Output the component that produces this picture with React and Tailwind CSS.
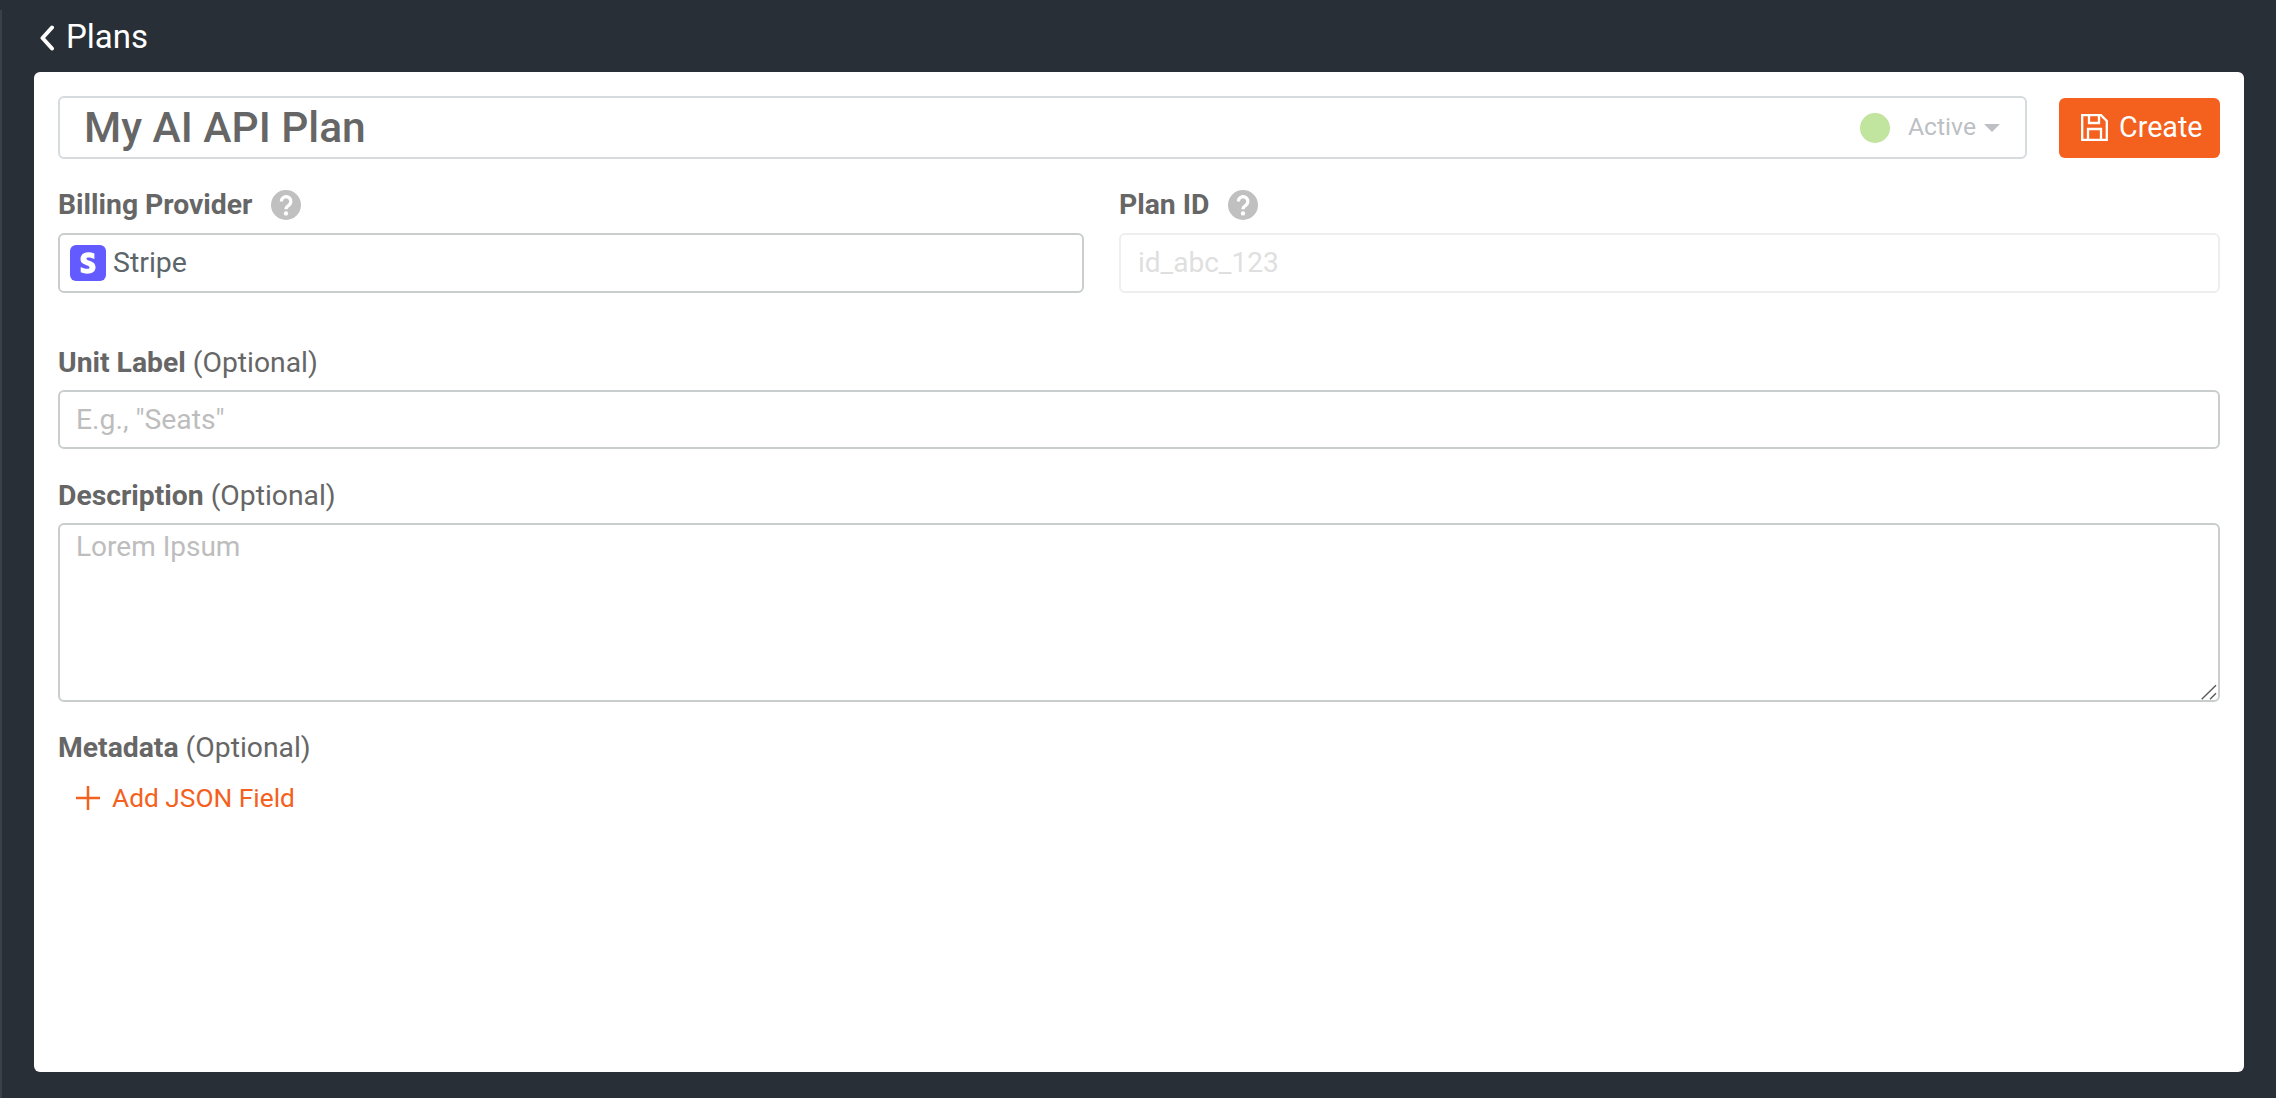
import React from "react";
import { FaStripeS } from "react-icons/fa";

function Help() {
  return (
    <svg width="30" height="30" viewBox="0 0 30 30" fill="none" className="ml-[19px] shrink-0">
      <circle cx="15" cy="15" r="15" fill="#c0c0c0" />
      <path d="M10.4 11.4a4.7 4.7 0 1 1 7.3 3.9c-1.8 1.2-2.7 2-2.7 3.9" stroke="white" strokeWidth="3.2" />
      <circle cx="15" cy="23.4" r="2.2" fill="white" />
    </svg>
  );
}

function Label({ bold, optional }) {
  return (
    <div className="h-[30px] text-[28.3px] leading-[30px] text-[#666666]">
      <span className="font-bold">{bold}</span>
      {optional ? <span> (Optional)</span> : null}
    </div>
  );
}

export default function App() {
  return (
    <div className="h-screen bg-[#292f36] flex font-['Roboto',sans-serif]">
      <div className="w-[2px] mt-[10px] bg-[#3a4048]" />
      <div className="flex-1 flex flex-col min-w-0 pl-[32px] pr-[32px] pb-[26px]">
        <div className="h-[72px] flex items-center shrink-0 pl-[4px]">
          <svg width="18" height="26" viewBox="0 0 18 26" fill="none" className="mt-[3px]">
            <path d="M14 2.5 L4.5 13 L14 23.5" stroke="white" strokeWidth="4" strokeLinecap="round" strokeLinejoin="round" />
          </svg>
          <span className="ml-[10px] text-[33px] leading-none text-white">Plans</span>
        </div>
        <div className="flex-1 bg-white rounded-[6px] px-[24px] pt-[24px] flex flex-col">
          <div className="flex items-center gap-[32px]">
            <div className="flex-1 h-[63px] border-2 border-[#d6dbde] rounded-[6px] flex items-center pl-[24px] pr-[25px]">
              <span className="pt-[2px] text-[42.5px] leading-none font-medium text-[#666666]">My AI API Plan</span>
              <span className="ml-auto w-[30px] h-[30px] rounded-full bg-[#c1e49f]" />
              <span className="ml-[18px] text-[24.7px] leading-none text-[#bcbfc4]">Active</span>
              <span className="ml-[8px] w-0 h-0 border-x-[8px] border-t-[8px] border-x-transparent border-t-[#bcbfc4]" />
            </div>
            <button className="w-[161px] h-[60px] bg-[#f4601d] rounded-[6px] flex items-center pl-[22px] text-white">
              <svg width="27" height="27" viewBox="0 0 27 27" fill="none" stroke="white" strokeWidth="2.3">
                <path d="M1.2 1.2H20L25.8 7V25.8H1.2Z" />
                <path d="M8 1.2V9H18V1.2" />
                <path d="M7 25.8V15H20V25.8" />
              </svg>
              <span className="ml-[11px] text-[28.7px] leading-none">Create</span>
            </button>
          </div>

          <div className="grid grid-cols-[1026px_1fr] gap-x-[35px] mt-[31px]">
            <div>
              <div className="flex items-center h-[30px]">
                <Label bold="Billing Provider" />
                <Help />
              </div>
              <div className="mt-[13px] h-[60px] border-2 border-[#c9cdcd] rounded-[6px] flex items-center pl-[10px]">
                <span className="w-[36px] h-[36px] rounded-[6px] bg-[#635bff] flex items-center justify-center">
                  <FaStripeS className="w-[16px] h-[22px] text-white" />
                </span>
                <span className="ml-[7px] text-[28.5px] leading-none text-[#5c6569]">Stripe</span>
              </div>
            </div>
            <div>
              <div className="flex items-center h-[30px]">
                <Label bold="Plan ID" />
                <Help />
              </div>
              <input
                placeholder="id_abc_123"
                className="mt-[13px] block w-full h-[60px] border-2 border-[#eeeeee] rounded-[6px] pl-[17px] pb-[2px] text-[28px] outline-none placeholder:text-[#dfdfdf]"
              />
            </div>
          </div>

          <div className="mt-[55px]">
            <Label bold="Unit Label" optional />
          </div>
          <input
            placeholder={'E.g., "Seats"'}
            className="mt-[12px] block w-full h-[59px] border-2 border-[#c9cdcd] rounded-[6px] pl-[16px] text-[28.3px] outline-none placeholder:text-[#bdbdbd]"
          />

          <div className="mt-[32px]">
            <Label bold="Description" optional />
          </div>
          <div className="relative mt-[12px] h-[179px]">
            <textarea
              placeholder="Lorem Ipsum"
              className="block w-full h-full resize-none border-2 border-[#c9cdcd] rounded-[6px] pl-[16px] pt-[7px] text-[28px] leading-[30px] outline-none placeholder:text-[#bdbdbd]"
            />
            <svg width="16" height="16" viewBox="0 0 16 16" fill="none" className="absolute right-[3px] bottom-[2px] pointer-events-none">
              <path d="M0.7 15.3L15 1.3M9 15.3L15 9.3" stroke="#5a5a5a" strokeWidth="1.4" />
            </svg>
          </div>

          <div className="mt-[31px]">
            <Label bold="Metadata" optional />
          </div>
          <button className="mt-[20px] self-start h-[30px] flex items-center ml-[18px] text-[#f4601d]">
            <svg width="24" height="24" viewBox="0 0 24 24" fill="none">
              <path d="M12 0V24M0 12H24" stroke="#f4601d" strokeWidth="2.5" />
            </svg>
            <span className="ml-[12px] text-[26.3px] leading-none">Add JSON Field</span>
          </button>
        </div>
      </div>
    </div>
  );
}
